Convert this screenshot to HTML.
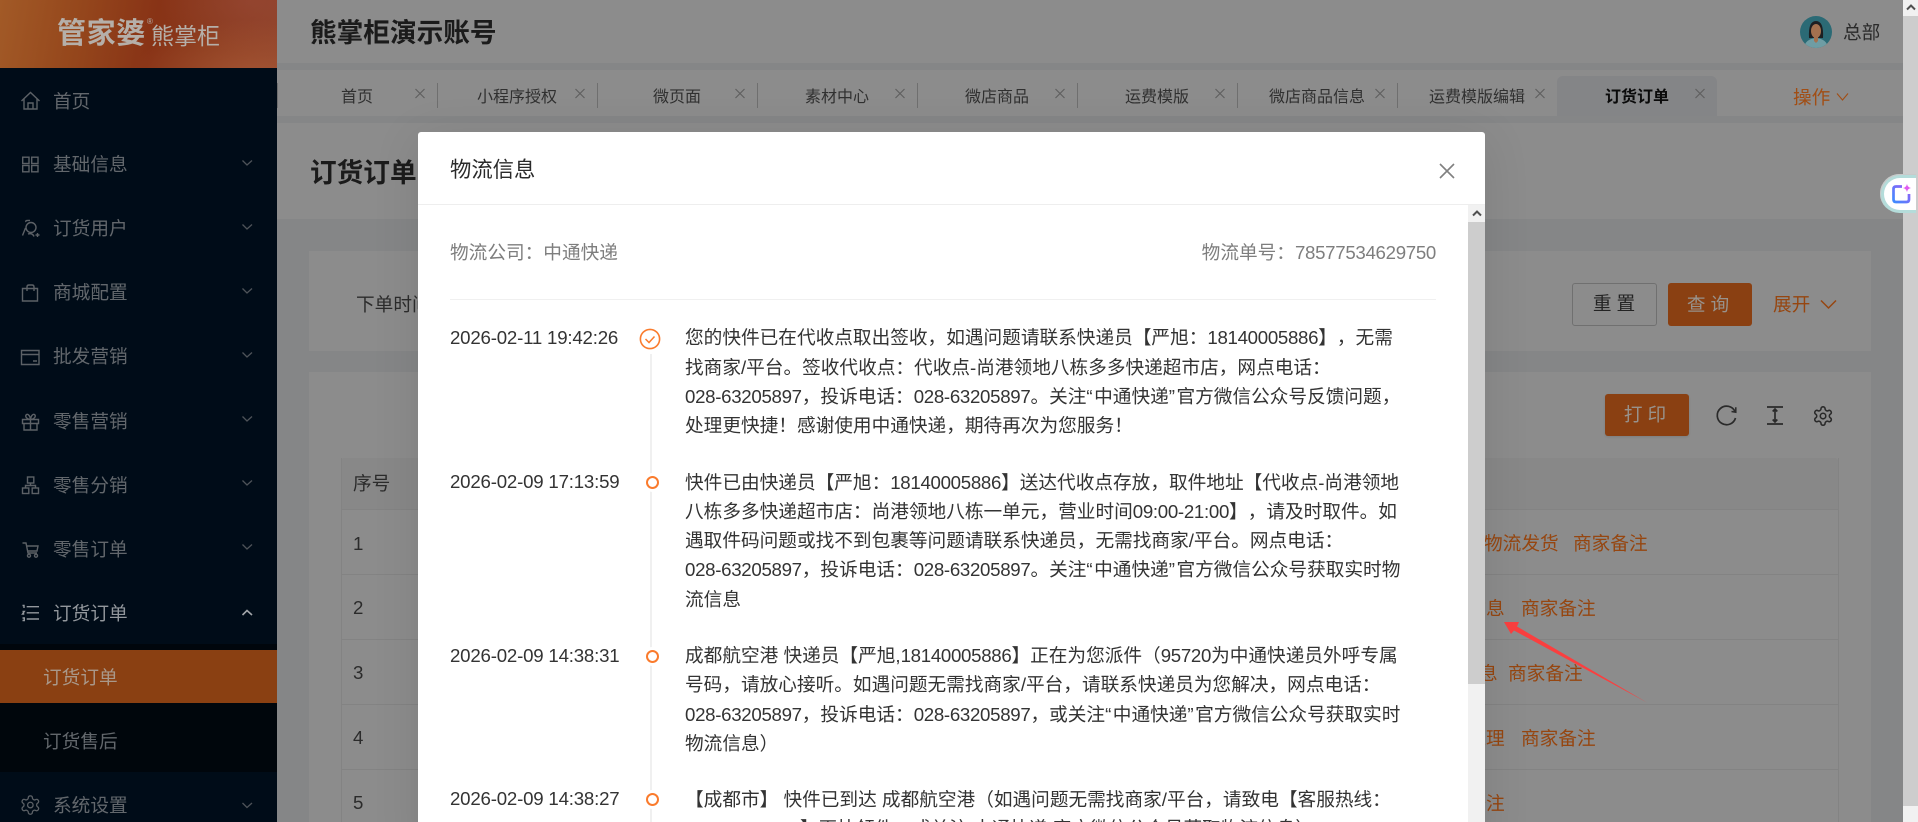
<!DOCTYPE html>
<html lang="zh-CN">
<head>
<meta charset="utf-8">
<title>物流信息</title>
<style>
html,body{margin:0;padding:0;width:1918px;height:822px;overflow:hidden;background:#858687}
body{font-family:"Liberation Sans","Noto Sans CJK SC",sans-serif;font-size:18.67px;position:relative;text-spacing-trim:space-all}
.a{position:absolute;white-space:nowrap}
.bg{position:absolute}
.m{position:absolute;left:53px;height:30px;line-height:30px;color:#62676c;white-space:nowrap}
.tab{position:absolute;top:83px;height:30px;line-height:30px;font-size:16px;color:#303030;text-align:center;width:160px}
.sep{position:absolute;top:83px;height:25px;width:1px;background:#6f6f6f}
.link{position:absolute;color:#964610;line-height:30px;white-space:nowrap}
.num{position:absolute;left:353px;line-height:30px;color:#2b2b2b}
.rowline{position:absolute;left:341px;width:1497px;height:1px;background:#838383}
.time{position:absolute;left:450px;line-height:30px;color:#333;letter-spacing:-.2px;white-space:nowrap}
.txt{position:absolute;left:685px;line-height:29.33px;color:#333;white-space:nowrap}
.d{letter-spacing:-.3px}
.q{letter-spacing:1.5px}
.dot{position:absolute;left:645.5px;width:13px;height:13px;box-sizing:border-box;border:2.8px solid #fa7b2d;border-radius:50%;background:#fff;box-shadow:0 0 0 3px #fff}
</style>
</head>
<body>
<!-- sidebar -->
<div class="bg" style="left:0;top:0;width:277px;height:822px;background:#000c18"></div>
<div class="bg" style="left:0;top:644px;width:277px;height:128px;background:#00060c"></div>
<div class="bg" style="left:0;top:0;width:277px;height:68px;background:
 radial-gradient(ellipse 120px 60px at 250px 80px,rgba(190,110,70,.45),rgba(190,110,70,0) 100%),
 radial-gradient(ellipse 90px 55px at 250px 0,rgba(160,80,70,.35),rgba(160,80,70,0) 100%),
 linear-gradient(100deg,#a25a27 0%,#95471c 28%,#883316 55%,#8a3a1d 75%,#8f4228 100%)"></div>
<div class="a" style="left:57px;top:13px;font-size:29px;line-height:42px;font-weight:700;color:#b5afa9;letter-spacing:.6px">管家婆</div>
<div class="a" style="left:147px;top:17px;font-size:8px;line-height:10px;color:#b5afa9">®</div>
<div class="a" style="left:151px;top:18px;font-size:23px;line-height:36px;font-weight:400;color:#b5afa9">熊掌柜</div>
<div class="bg" style="left:0;top:650px;width:277px;height:53px;background:#8a4012"></div>

<div class="m" style="top:87px">首页</div>
<div class="m" style="top:150px">基础信息</div>
<div class="m" style="top:214px">订货用户</div>
<div class="m" style="top:278px">商城配置</div>
<div class="m" style="top:342px">批发营销</div>
<div class="m" style="top:407px">零售营销</div>
<div class="m" style="top:471px">零售分销</div>
<div class="m" style="top:535px">零售订单</div>
<div class="m" style="top:599px;color:#92979c">订货订单</div>
<div class="m" style="left:43px;top:663px;color:#a9988a">订货订单</div>
<div class="m" style="left:43px;top:727px">订货售后</div>
<div class="m" style="top:791px">系统设置</div>

<svg class="bg" style="left:0;top:0" width="277" height="822" viewBox="0 0 277 822" fill="none" stroke="#5c6166" stroke-width="1.4">
 <path d="M21.5 101 L30.5 92.5 L39.5 101 M24 99 V109 H37 V99 M28 109 V103 H33 V109"/>
 <rect x="22.7" y="157.2" width="6.3" height="6.3"/><rect x="31.7" y="157.2" width="6.3" height="6.3"/><rect x="22.7" y="165.5" width="6.3" height="6.3"/><rect x="31.7" y="165.5" width="6.3" height="6.3"/>
 <circle cx="31" cy="227.5" r="5"/><path d="M26 222 C25 220 28 220.5 30 220.5 M25.5 228 L22.5 235.5 M28 234 C31 233 33 234 34 236.5 M35.5 235 H39.5 M37.5 233 V237"/>
 <path d="M22.5 288.5 H37.5 V301 H22.5 Z M27 291 V287 Q27 285 29 285 H32 Q34 285 34 287 V291"/>
 <path d="M21.5 350.5 H39 V364.5 H21.5 Z M21.5 354.5 H39 M33 361 H37"/>
 <path d="M22.5 419.5 H38.5 V423.5 H22.5 Z M24 423.5 V430 H37 V423.5 M30.5 419.5 V430 M30.5 419.5 C27 419 25 417 26 415 C27.5 413 30 415.5 30.5 419.5 C31 415.5 33.5 413 35 415 C36 417 34 419 30.5 419.5"/>
 <rect x="27.5" y="477" width="6.3" height="6"/><rect x="22.5" y="488" width="6.3" height="5.5"/><rect x="32.2" y="488" width="6.3" height="5.5"/><path d="M30.5 483 V485.5 M25.5 488 V485.5 H35.5 V488"/>
 <path d="M22.5 543 H26 L28 553 H37 M26.5 546 H38 L37 551 H27.5"/><circle cx="29" cy="555.7" r="1.5"/><circle cx="36" cy="555.7" r="1.5"/>
 <path stroke="#93989d" d="M26.7 606.7 H39 M26.7 612.8 H39 M26.7 619 H39 M22.5 605.5 H24 V608 M22.5 611.5 H24.3 L22.5 614 H24.3 M22.5 618 H24.3 V620.5 H22.5"/>
 <g transform="translate(19.3,794) scale(.92)"><path d="M12.22 2h-.44a2 2 0 0 0-2 2v.18a2 2 0 0 1-1 1.73l-.43.25a2 2 0 0 1-2 0l-.15-.08a2 2 0 0 0-2.73.73l-.22.38a2 2 0 0 0 .73 2.73l.15.1a2 2 0 0 1 1 1.72v.51a2 2 0 0 1-1 1.74l-.15.09a2 2 0 0 0-.73 2.73l.22.38a2 2 0 0 0 2.73.73l.15-.08a2 2 0 0 1 2 0l.43.25a2 2 0 0 1 1 1.73V20a2 2 0 0 0 2 2h.44a2 2 0 0 0 2-2v-.18a2 2 0 0 1 1-1.73l.43-.25a2 2 0 0 1 2 0l.15.08a2 2 0 0 0 2.73-.73l.22-.39a2 2 0 0 0-.73-2.73l-.15-.08a2 2 0 0 1-1-1.74v-.5a2 2 0 0 1 1-1.74l.15-.09a2 2 0 0 0 .73-2.73l-.22-.38a2 2 0 0 0-2.73-.73l-.15.08a2 2 0 0 1-2 0l-.43-.25a2 2 0 0 1-1-1.73V4a2 2 0 0 0-2-2z"/><circle cx="12" cy="12" r="3"/></g>
 <g stroke="#4e5359" stroke-width="1.3">
  <path d="M242.5 160.5 L247 165 L252 160.5"/><path d="M242.5 224.5 L247 229 L252 224.5"/><path d="M242.5 288.5 L247 293 L252 288.5"/><path d="M242.5 352.5 L247 357 L252 352.5"/><path d="M242.5 416.5 L247 421 L252 416.5"/><path d="M242.5 480.5 L247 485 L252 480.5"/><path d="M242.5 544.5 L247 549 L252 544.5"/><path d="M242.5 803 L247 807.5 L252 803"/>
 </g>
 <path stroke="#a2a6aa" stroke-width="1.6" d="M242.5 615 L247 610.5 L252 615"/>
</svg>

<!-- header -->
<div class="bg" style="left:277px;top:0;width:1626px;height:63px;background:#8c8c8c"></div>
<div class="a" style="left:310px;top:13px;font-size:26.67px;line-height:40px;font-weight:700;color:#1b1b1b">熊掌柜演示账号</div>
<svg class="bg" style="left:1800px;top:16px" width="32" height="32" viewBox="0 0 32 32">
 <defs><clipPath id="c"><circle cx="16" cy="16" r="16"/></clipPath></defs>
 <g clip-path="url(#c)"><rect width="32" height="32" fill="#2b6a75"/><path d="M4 32 Q5 23 16 22 Q27 23 28 32Z" fill="#6f9da4"/><path d="M9 22 Q8 5 16 5 Q24 5 23 22Z" fill="#1d1f22"/><ellipse cx="16" cy="15" rx="5" ry="7" fill="#a3714f"/><path d="M14 21 H18 V25 L16 27 L14 25Z" fill="#a3714f"/></g>
</svg>
<div class="a" style="left:1843px;top:18px;line-height:30px;color:#2a2a2a">总部</div>

<!-- tabs -->
<div class="bg" style="left:277px;top:70px;width:1626px;height:46px;background:#8c8c8c"></div>
<div class="bg" style="left:1557px;top:76px;width:160px;height:40px;background:#848587;border-radius:6px 6px 0 0"></div>
<div class="sep" style="left:277px"></div><div class="sep" style="left:437px"></div><div class="sep" style="left:597px"></div><div class="sep" style="left:757px"></div><div class="sep" style="left:917px"></div><div class="sep" style="left:1077px"></div><div class="sep" style="left:1237px"></div><div class="sep" style="left:1397px"></div>
<div class="tab" style="left:277px">首页</div>
<div class="tab" style="left:437px">小程序授权</div>
<div class="tab" style="left:597px">微页面</div>
<div class="tab" style="left:757px">素材中心</div>
<div class="tab" style="left:917px">微店商品</div>
<div class="tab" style="left:1077px">运费模版</div>
<div class="tab" style="left:1237px">微店商品信息</div>
<div class="tab" style="left:1397px">运费模版编辑</div>
<div class="tab" style="left:1557px;color:#0a0a0a;font-weight:700">订货订单</div>
<svg class="bg" style="left:277px;top:70px" width="1440" height="46" fill="none" stroke="#5f5f5f" stroke-width="1.2">
 <path d="M138.5 19 L147.5 28 M147.5 19 L138.5 28"/><path d="M298.5 19 L307.5 28 M307.5 19 L298.5 28"/><path d="M458.5 19 L467.5 28 M467.5 19 L458.5 28"/><path d="M618.5 19 L627.5 28 M627.5 19 L618.5 28"/><path d="M778.5 19 L787.5 28 M787.5 19 L778.5 28"/><path d="M938.5 19 L947.5 28 M947.5 19 L938.5 28"/><path d="M1098.5 19 L1107.5 28 M1107.5 19 L1098.5 28"/><path d="M1258.5 19 L1267.5 28 M1267.5 19 L1258.5 28"/><path d="M1418.5 19 L1427.5 28 M1427.5 19 L1418.5 28"/>
</svg>
<div class="a" style="left:1793px;top:83px;line-height:30px;color:#a14e15">操作</div>
<svg class="bg" style="left:1836px;top:92px" width="14" height="10" fill="none" stroke="#a14e15" stroke-width="1.1"><path d="M1 1.5 L6.5 8 L12 1.5"/></svg>

<!-- page title -->
<div class="bg" style="left:277px;top:123px;width:1626px;height:96px;background:#8c8c8c"></div>
<div class="a" style="left:310px;top:153px;font-size:26.67px;line-height:40px;font-weight:700;color:#1b1b1b">订货订单</div>

<!-- filter card -->
<div class="bg" style="left:309px;top:251px;width:1562px;height:100px;background:#8c8c8c"></div>
<div class="a" style="left:356px;top:290px;line-height:30px;color:#2c2c2c">下单时间</div>
<div class="bg" style="left:1572px;top:283px;width:85px;height:43px;box-sizing:border-box;border:1.33px solid #707070;border-radius:3px;text-align:center;line-height:40px;color:#242424;letter-spacing:5px;padding-left:4px">重置</div>
<div class="bg" style="left:1668px;top:283px;width:84px;height:43px;background:#8a4012;border-radius:3px;text-align:center;line-height:43px;color:#98928c;letter-spacing:5px;padding-left:1px;box-sizing:border-box">查询</div>
<div class="a" style="left:1773px;top:290px;line-height:30px;color:#964610">展开</div>
<svg class="bg" style="left:1820px;top:299px" width="17" height="11" fill="none" stroke="#964610" stroke-width="1.5"><path d="M1 1.5 L8.5 9 L16 1.5"/></svg>

<!-- table card -->
<div class="bg" style="left:309px;top:372px;width:1562px;height:450px;background:#8c8c8c"></div>
<div class="bg" style="left:1605px;top:394px;width:84px;height:42px;background:#8a4012;border-radius:3px;text-align:center;line-height:42px;color:#98928c;letter-spacing:5px;padding-left:1px;box-sizing:border-box;box-shadow:0 1px 2px rgba(0,0,0,.1)">打印</div>
<svg class="bg" style="left:1710px;top:400px" width="130" height="32" viewBox="0 0 130 32" fill="none" stroke="#2a2a2a" stroke-width="1.7">
 <path d="M26 11.5 A9.3 9.3 0 1 0 26.5 18" transform="translate(-1,0)"/><path d="M21.5 11.5 L25.8 12.2 L25.8 7.3" stroke-width="1.5"/>
 <path d="M57 7 H73 M57 24 H73 M65 9 V22 M62.7 11.5 L65 9 L67.3 11.5 M62.7 19.5 L65 22 L67.3 19.5"/>
 <g transform="translate(102,5) scale(.92)"><path d="M12.22 2h-.44a2 2 0 0 0-2 2v.18a2 2 0 0 1-1 1.73l-.43.25a2 2 0 0 1-2 0l-.15-.08a2 2 0 0 0-2.73.73l-.22.38a2 2 0 0 0 .73 2.73l.15.1a2 2 0 0 1 1 1.72v.51a2 2 0 0 1-1 1.74l-.15.09a2 2 0 0 0-.73 2.73l.22.38a2 2 0 0 0 2.73.73l.15-.08a2 2 0 0 1 2 0l.43.25a2 2 0 0 1 1 1.73V20a2 2 0 0 0 2 2h.44a2 2 0 0 0 2-2v-.18a2 2 0 0 1 1-1.73l.43-.25a2 2 0 0 1 2 0l.15.08a2 2 0 0 0 2.73-.73l.22-.39a2 2 0 0 0-.73-2.73l-.15-.08a2 2 0 0 1-1-1.74v-.5a2 2 0 0 1 1-1.74l.15-.09a2 2 0 0 0 .73-2.73l-.22-.38a2 2 0 0 0-2.73-.73l-.15.08a2 2 0 0 1-2 0l-.43-.25a2 2 0 0 1-1-1.73V4a2 2 0 0 0-2-2z"/><circle cx="12" cy="12" r="3"/></g>
</svg>
<div class="bg" style="left:341px;top:458px;width:1497px;height:51px;background:#888888;border-radius:3px 3px 0 0"></div>
<div class="bg" style="left:341px;top:458px;width:1px;height:364px;background:#838383"></div>
<div class="bg" style="left:1838px;top:458px;width:1px;height:364px;background:#838383"></div>
<div class="rowline" style="top:509px"></div><div class="rowline" style="top:574px"></div><div class="rowline" style="top:639px"></div><div class="rowline" style="top:704px"></div><div class="rowline" style="top:769px"></div>
<div class="num" style="top:469px">序号</div>
<div class="num" style="top:529px">1</div><div class="num" style="top:593px">2</div><div class="num" style="top:658px">3</div><div class="num" style="top:723px">4</div><div class="num" style="top:788px">5</div>
<div class="link" style="left:1484px;top:529px">物流发货</div><div class="link" style="left:1573px;top:529px">商家备注</div>
<div class="link" style="left:1430px;top:594px">物流信息</div><div class="link" style="left:1521px;top:594px">商家备注</div>
<div class="link" style="left:1423px;top:659px">物流信息</div><div class="link" style="left:1508px;top:659px">商家备注</div>
<div class="link" style="left:1430px;top:724px">售后处理</div><div class="link" style="left:1521px;top:724px">商家备注</div>
<div class="link" style="left:1430px;top:789px">商家备注</div>

<!-- annotation arrow -->
<svg class="bg" style="left:1500px;top:618px" width="160" height="95" viewBox="1500 618 160 95"><polygon points="1504,622 1519,622 1517,626.5 1647,702.5 1514,630.5 1511,634" fill="#fa3f3f"/></svg>

<!-- modal -->
<div class="bg" style="left:418px;top:132px;width:1067px;height:720px;background:#fff;border-radius:3px;box-shadow:0 8px 48px rgba(0,0,0,.1)"></div>
<div class="a" style="left:450px;top:154px;font-size:21.33px;line-height:32px;color:#2a2a2a">物流信息</div>
<svg class="bg" style="left:1439px;top:163px" width="16" height="16" fill="none" stroke="#808080" stroke-width="1.6"><path d="M1 1 L15 15 M15 1 L1 15"/></svg>
<div class="bg" style="left:418px;top:204px;width:1067px;height:1px;background:#eeeeee"></div>

<div class="a" style="left:450px;top:238px;line-height:30px;color:#7e7e7e">物流公司：中通快递</div>
<div class="a" style="right:482px;top:238px;line-height:30px;color:#7e7e7e">物流单号：<span class="d">78577534629750</span></div>
<div class="bg" style="left:450px;top:299px;width:986px;height:1px;background:#f0f0f0"></div>

<div class="bg" style="left:649.5px;top:354px;width:2.7px;height:468px;background:#f0f0f0"></div>

<div class="time" style="top:323px">2026-02-11 19:42:26</div>
<svg class="bg" style="left:639px;top:328px" width="22" height="22" fill="none" stroke="#fa7b2d"><circle cx="11" cy="11" r="9.6" stroke-width="1.6"/><path d="M6.5 11 L10 14.5 L15.5 8.5" stroke-width="1.5"/></svg>
<div class="txt" style="top:323.2px">您的快件已在代收点取出签收，如遇问题请联系快递员【严旭：<span class="d">18140005886</span>】，无需<br>找商家/平台。签收代收点：代收点-尚港领地八栋多多快递超市店，网点电话：<br><span class="d">028-63205897</span>，投诉电话：<span class="d">028-63205897</span>。关注<span class="q">“</span>中通快递<span class="q">”</span>官方微信公众号反馈问题，<br>处理更快捷！感谢使用中通快递，期待再次为您服务！</div>

<div class="time" style="top:467px">2026-02-09 17:13:59</div>
<div class="dot" style="top:476px"></div>
<div class="txt" style="top:467.5px">快件已由快递员【严旭：<span class="d">18140005886</span>】送达代收点存放，取件地址【代收点-尚港领地<br>八栋多多快递超市店：尚港领地八栋一单元，营业时间<span class="d">09:00-21:00</span>】，请及时取件。如<br>遇取件码问题或找不到包裹等问题请联系快递员，无需找商家/平台。网点电话：<br><span class="d">028-63205897</span>，投诉电话：<span class="d">028-63205897</span>。关注<span class="q">“</span>中通快递<span class="q">”</span>官方微信公众号获取实时物<br>流信息</div>

<div class="time" style="top:641px">2026-02-09 14:38:31</div>
<div class="dot" style="top:649.5px"></div>
<div class="txt" style="top:641px">成都航空港 快递员【严旭,<span class="d">18140005886</span>】正在为您派件（<span class="d">95720</span>为中通快递员外呼专属<br>号码，请放心接听。如遇问题无需找商家/平台，请联系快递员为您解决，网点电话：<br><span class="d">028-63205897</span>，投诉电话：<span class="d">028-63205897</span>，或关注<span class="q">“</span>中通快递<span class="q">”</span>官方微信公众号获取实时<br>物流信息）</div>

<div class="time" style="top:784px">2026-02-09 14:38:27</div>
<div class="dot" style="top:793px"></div>
<div class="txt" style="top:784.5px">【成都市】 快件已到达 成都航空港（如遇问题无需找商家/平台，请致电【客服热线：</div>
<div class="txt" style="left:800px;top:813.8px">】再快领件，或关注 中通快递 官方微信公众号获取物流信息）</div>

<!-- modal scrollbar -->
<div class="bg" style="left:1468px;top:205px;width:17px;height:617px;background:#f1f1f1"></div>
<div class="bg" style="left:1468px;top:222px;width:17px;height:462px;background:#cdcdcd"></div>
<svg class="bg" style="left:1472px;top:209px" width="10" height="8" fill="none" stroke="#505050" stroke-width="2"><path d="M1 6.5 L5 2.5 L9 6.5"/></svg>

<!-- page scrollbar -->
<div class="bg" style="left:1903px;top:0;width:15px;height:822px;background:#f1f1f1"></div>
<div class="bg" style="left:1903px;top:16px;width:15px;height:790px;background:#cdcdcd"></div>
<svg class="bg" style="left:1906px;top:3px" width="10" height="8" fill="none" stroke="#505050" stroke-width="2"><path d="M1 6.5 L5 2.5 L9 6.5"/></svg>

<!-- floating plugin -->
<div class="bg" style="left:1880px;top:174px;width:36px;height:39px;border-radius:20px 0 0 20px;background:#b4dcda;box-shadow:inset 1px 1px 0 #c9c9c9"></div>
<div class="bg" style="left:1884px;top:178px;width:32px;height:32px;border-radius:16px 0 0 16px;background:#fff"></div>
<svg class="bg" style="left:1890px;top:183px" width="24" height="24" viewBox="0 0 24 24" fill="none">
 <defs><linearGradient id="g" x1="0" y1="1" x2="1" y2="0"><stop offset="0" stop-color="#3f8cff"/><stop offset="1" stop-color="#9a5cf5"/></linearGradient></defs>
 <path d="M12 3.5 H6 Q3.5 3.5 3.5 6 V16.5 Q3.5 19 6 19 H16.5 Q19 19 19 16.5 V11" stroke="url(#g)" stroke-width="2.7"/>
 <path d="M17 1 Q17.6 4.4 21 5 Q17.6 5.6 17 9 Q16.4 5.6 13 5 Q16.4 4.4 17 1Z" fill="#e05cf0"/>
</svg>
</body>
</html>
